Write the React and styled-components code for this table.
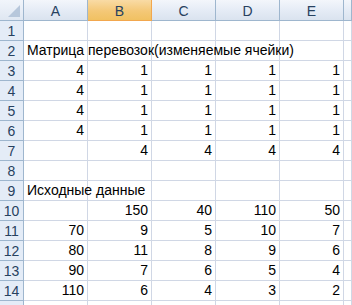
import styled, { createGlobalStyle } from "styled-components";

const GlobalStyle = createGlobalStyle`
  html, body {
    margin: 0;
    padding: 0;
    background: #ffffff;
    overflow: hidden;
  }
`;

const columns = ["A", "B", "C", "D", "E", ""];
const selectedCol = "B";

const rows = [
  [],
  [{ col: 0, text: "Матрица перевозок(изменяемые ячейки)", left: true }],
  ["4", "1", "1", "1", "1"],
  ["4", "1", "1", "1", "1"],
  ["4", "1", "1", "1", "1"],
  ["4", "1", "1", "1", "1"],
  ["", "4", "4", "4", "4"],
  [],
  [{ col: 0, text: "Исходные данные", left: true }],
  ["", "150", "40", "110", "50"],
  ["70", "9", "5", "10", "7"],
  ["80", "11", "8", "9", "6"],
  ["90", "7", "6", "5", "4"],
  ["110", "6", "4", "3", "2"],
  [],
];

export default function App() {
  return (
    <>
      <GlobalStyle />
      <Sheet>
        <Corner>
          <CornerMark />
        </Corner>
        {columns.map((c, i) => (
          <ColHeader key={"h" + i} selected={c === selectedCol}>
            {c}
          </ColHeader>
        ))}
        {rows.map((row, r) => {
          const label = row[0] && typeof row[0] === "object" ? row[0] : null;
          const last = r === rows.length - 1;
          return [
            <RowHeader key={"r" + r}>{last ? "" : r + 1}</RowHeader>,
            ...columns.map((_, c) => {
              if (label) {
                return (
                  <Cell key={r + "-" + c}>
                    {c === 0 && <Label>{label.text}</Label>}
                  </Cell>
                );
              }
              return <Cell key={r + "-" + c}>{row[c] || ""}</Cell>;
            }),
          ];
        })}
      </Sheet>
    </>
  );
}

const Sheet = styled.div`
  display: grid;
  grid-template-columns: 24px repeat(5, 64px) 1fr;
  grid-template-rows: 21px repeat(15, 20px);
  width: 352px;
  height: 305px;
  overflow: hidden;
  font-family: "Liberation Sans", Arial, sans-serif;
  font-size: 14px;
`;

const Corner = styled.div`
  position: relative;
  box-sizing: border-box;
  border-right: 1px solid #9eb6ce;
  border-bottom: 1px solid #9eb6ce;
  background: linear-gradient(#f1f5fb, #dfe7f2);
`;

const CornerMark = styled.div`
  position: absolute;
  right: 3px;
  bottom: 3px;
  width: 0;
  height: 0;
  border-left: 12px solid transparent;
  border-bottom: 12px solid #b7c7db;
`;

const ColHeader = styled.div`
  box-sizing: border-box;
  display: flex;
  align-items: center;
  justify-content: center;
  border-right: 1px solid ${(p) => (p.selected ? "#f2a74e" : "#9eb6ce")};
  border-bottom: 1px solid ${(p) => (p.selected ? "#f2a74e" : "#9eb6ce")};
  background: ${(p) =>
    p.selected
      ? "linear-gradient(#f9dba5, #f4c877 55%, #f1c162)"
      : "linear-gradient(#f3f6fb, #e4ebf5 55%, #dae3ef)"};
  color: #27415f;
  padding-top: 1px;
`;

const RowHeader = styled.div`
  box-sizing: border-box;
  display: flex;
  align-items: center;
  justify-content: center;
  border-right: 1px solid #9eb6ce;
  border-bottom: 1px solid #9eb6ce;
  background: #e4ecf7;
  color: #27415f;
`;

const Cell = styled.div`
  position: relative;
  box-sizing: border-box;
  display: flex;
  align-items: flex-end;
  justify-content: flex-end;
  padding: 0 3px 1px 0;
  border-right: 1px solid #d0d7e5;
  border-bottom: 1px solid #d0d7e5;
  color: #000000;
  white-space: nowrap;
  line-height: 17px;
`;

const Label = styled.span`
  position: absolute;
  left: 3px;
  bottom: 1px;
  line-height: 17px;
  white-space: nowrap;
  z-index: 1;
`;
